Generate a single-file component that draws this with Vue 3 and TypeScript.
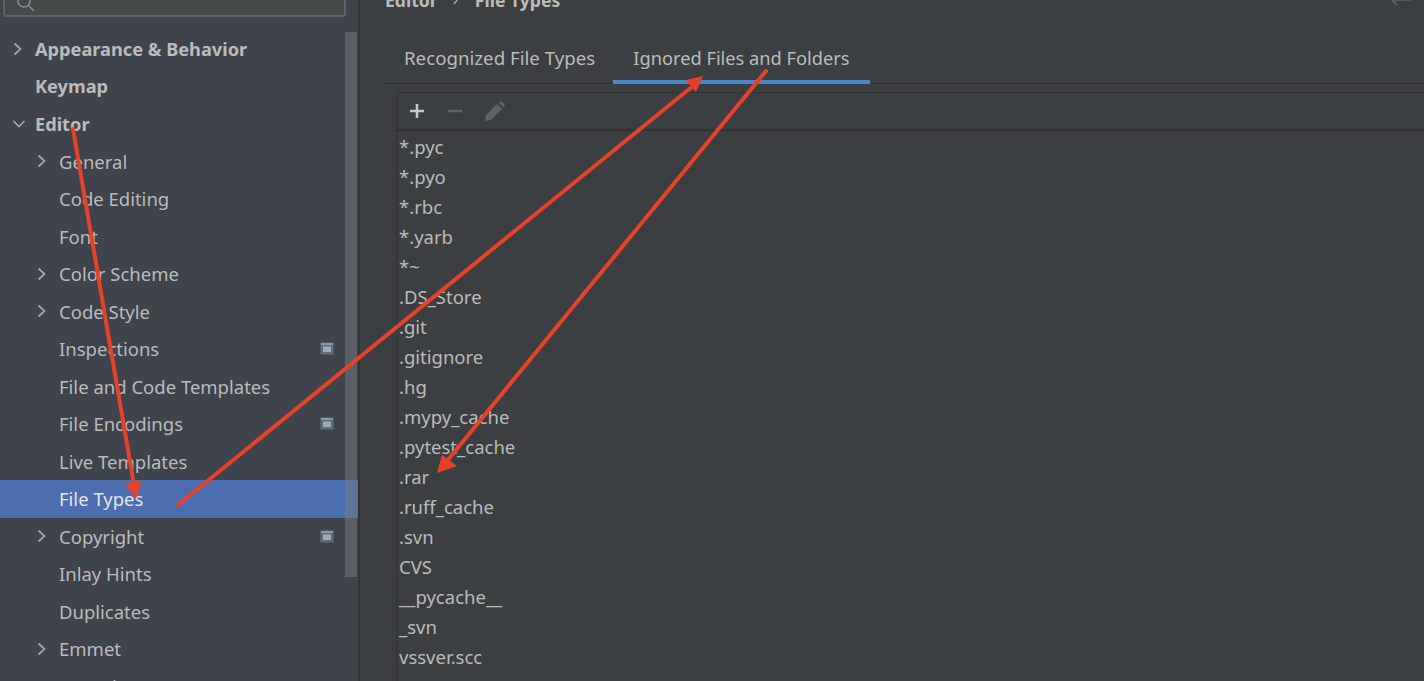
<script setup lang="ts">
interface NavItem {
  label: string;
  level: number;
  chevron?: 'right' | 'down';
  bold?: boolean;
  selected?: boolean;
  badge?: boolean;
}

const navItems: NavItem[] = [
  { label: 'Appearance & Behavior', level: 0, chevron: 'right', bold: true },
  { label: 'Keymap', level: 0, bold: true },
  { label: 'Editor', level: 0, chevron: 'down', bold: true },
  { label: 'General', level: 1, chevron: 'right' },
  { label: 'Code Editing', level: 1 },
  { label: 'Font', level: 1 },
  { label: 'Color Scheme', level: 1, chevron: 'right' },
  { label: 'Code Style', level: 1, chevron: 'right' },
  { label: 'Inspections', level: 1, badge: true },
  { label: 'File and Code Templates', level: 1 },
  { label: 'File Encodings', level: 1, badge: true },
  { label: 'Live Templates', level: 1 },
  { label: 'File Types', level: 1, selected: true },
  { label: 'Copyright', level: 1, chevron: 'right', badge: true },
  { label: 'Inlay Hints', level: 1 },
  { label: 'Duplicates', level: 1 },
  { label: 'Emmet', level: 1, chevron: 'right' },
  { label: 'Intentions', level: 1 },
];

const patterns: string[] = [
  '*.pyc', '*.pyo', '*.rbc', '*.yarb', '*~', '.DS_Store', '.git', '.gitignore', '.hg',
  '.mypy_cache', '.pytest_cache', '.rar', '.ruff_cache', '.svn', 'CVS', '__pycache__',
  '_svn', 'vssver.scc', 'vssver2.scc',
];
</script>

<template>
  <div class="settings">
    <aside class="sidebar">
      <div class="search">
        <svg class="search-icon" width="22" height="22" viewBox="0 0 22 22" fill="none">
          <circle cx="9" cy="9" r="6" stroke="#8a8d8f" stroke-width="1.6" />
          <path d="M13.5 13.5 L19 19" stroke="#8a8d8f" stroke-width="1.6" />
        </svg>
      </div>
      <div class="tree-wrap">
        <ul class="tree">
          <li
            v-for="item in navItems"
            :key="item.label"
            class="row"
            :class="{ selected: item.selected, bold: item.bold, nested: item.level === 1 }"
          >
            <span class="chev-slot">
              <svg v-if="item.chevron === 'right'" width="12" height="14" viewBox="0 0 12 14" fill="none">
                <path d="M2.5 1.5 L8.5 7 L2.5 12.5" stroke="#a4a7a9" stroke-width="1.7" />
              </svg>
              <svg v-else-if="item.chevron === 'down'" width="14" height="12" viewBox="0 0 14 12" fill="none">
                <path d="M1.5 3 L7 8.5 L12.5 3" stroke="#a4a7a9" stroke-width="1.7" />
              </svg>
            </span>
            <span class="label">{{ item.label }}</span>
            <svg v-if="item.badge" class="badge" width="14" height="13" viewBox="0 0 14 13">
              <rect x="0.5" y="0.5" width="13" height="12" fill="#5f6d78" />
              <rect x="1" y="1" width="12" height="2" fill="#869aa8" />
              <rect x="3" y="4.5" width="8" height="5.5" fill="#9aaab6" />
            </svg>
          </li>
        </ul>
        <div class="scrollbar"></div>
      </div>
    </aside>

    <main class="main">
      <header class="crumbs">
        <span>Editor</span>
        <svg class="crumb-sep" width="10" height="10" viewBox="0 0 10 10" fill="none">
          <path d="M3 9 L7 4" stroke="#a4a7a9" stroke-width="1.4" />
        </svg>
        <span>File Types</span>
        <svg class="back" width="22" height="9" viewBox="0 0 22 9" fill="none">
          <path d="M7 -3 L2 2 L7 7 M2 2 H21" stroke="#5e6162" stroke-width="1.6" />
        </svg>
      </header>

      <nav class="tabs">
        <span class="tab">Recognized File Types</span>
        <span class="tab active">Ignored Files and Folders</span>
      </nav>

      <section class="table">
        <div class="toolbar">
          <svg width="18" height="18" viewBox="0 0 18 18" fill="none">
            <path d="M9 2 V16 M2 9 H16" stroke="#c4c7c9" stroke-width="2.6" />
          </svg>
          <svg width="18" height="18" viewBox="0 0 18 18" fill="none">
            <path d="M2 9 H16" stroke="#5f6263" stroke-width="2.6" />
          </svg>
          <svg width="22" height="22" viewBox="0 0 22 22" fill="#5f6263">
            <path d="M1 21 L2 15 L13 4 L18 9 L7 20 Z" />
            <path d="M15 2.5 L17 1 L21 5 L19.5 7.5 Z" />
          </svg>
        </div>
        <ul class="patterns">
          <li v-for="p in patterns" :key="p">{{ p }}</li>
        </ul>
      </section>
    </main>

    <svg class="arrows" width="1424" height="681" viewBox="0 0 1424 681" fill="none">
      <g stroke="#e8412a" stroke-width="4" stroke-linecap="round">
        <path d="M73 129 L134 485" />
        <path d="M178 505 L693 86" />
        <path d="M766 71 L447 461" />
      </g>
      <g fill="#e8412a">
        <path d="M136 499 L125 484 L142 481 Z" />
        <path d="M703 76 L686 80 L696 92 Z" />
        <path d="M437 473 L442 455 L457 466 Z" />
      </g>
    </svg>
  </div>
</template>

<style>
html, body { margin: 0; padding: 0; background: #3c3f41; }
</style>

<style scoped>
.settings {
  position: relative;
  display: flex;
  width: 1424px;
  height: 681px;
  overflow: hidden;
  background: #3c3f41;
  font-family: "Noto Sans", "Open Sans", sans-serif;
  font-size: 18.5px;
  color: #bbbbbb;
}
ul { list-style: none; margin: 0; padding: 0; }

.sidebar {
  width: 358px;
  flex: none;
  display: flex;
  flex-direction: column;
  background: #3e434c;
  border-right: 2px solid #323436;
}
.search {
  height: 26px;
  margin: -14px 12px 0 3px;
  border: 2px solid #5f6263;
  border-radius: 4px;
  background: #45494a;
  flex: none;
  display: flex;
  align-items: flex-end;
  padding: 0 0 1px 10px;
}
.tree-wrap {
  position: relative;
  flex: 1;
  margin-top: 13px;
}
.row {
  height: 37.5px;
  display: flex;
  align-items: center;
  padding-left: 12px;
  white-space: nowrap;
}
.row.nested { padding-left: 36px; }
.row.bold { font-weight: 700; font-size: 18.2px; }
.row.selected { background: #4b6eaf; color: #e4e6e8; }
.chev-slot {
  width: 23px;
  flex: none;
  display: flex;
  align-items: center;
}
.badge { margin-left: auto; margin-right: 24px; }
.scrollbar {
  position: absolute;
  right: 1px;
  top: 2px;
  width: 12px;
  height: 545px;
  background: rgba(120, 124, 130, 0.5);
}

.main {
  flex: 1;
  min-width: 0;
  display: flex;
  flex-direction: column;
}
.crumbs {
  display: flex;
  align-items: center;
  height: 24px;
  margin-top: -12px;
  padding: 0 12px 0 25px;
  font-weight: 700;
  font-size: 17.6px;
  flex: none;
}
.crumb-sep { margin: 0 14px 0 13px; }
.back { margin-left: auto; align-self: flex-end; margin-bottom: 5px; }
.tabs {
  display: flex;
  height: 50px;
  margin: 21px 0 0 24px;
  border-bottom: 1px solid #323232;
  flex: none;
}
.tab {
  padding: 0 18px 2px 20px;
  display: flex;
  align-items: center;
  height: 50px;
  box-sizing: border-box;
  font-size: 18.7px;
}
.tab.active {
  border-bottom: 4px solid #4a88c7;
  height: 51px;
  padding: 2px 20px 0;
  font-size: 18.25px;
}
.table {
  flex: 1;
  margin: 8px 0 0 36px;
  border-left: 1px solid #323232;
  border-top: 1px solid #323232;
}
.toolbar {
  height: 36px;
  border-bottom: 2px solid #323232;
  display: flex;
  align-items: center;
  gap: 20px;
  padding-left: 11px;
}
.patterns { padding: 1px 0 0 2px; }
.patterns li {
  height: 30px;
  line-height: 30px;
  white-space: nowrap;
}
.arrows {
  position: absolute;
  left: 0;
  top: 0;
  pointer-events: none;
}
</style>
